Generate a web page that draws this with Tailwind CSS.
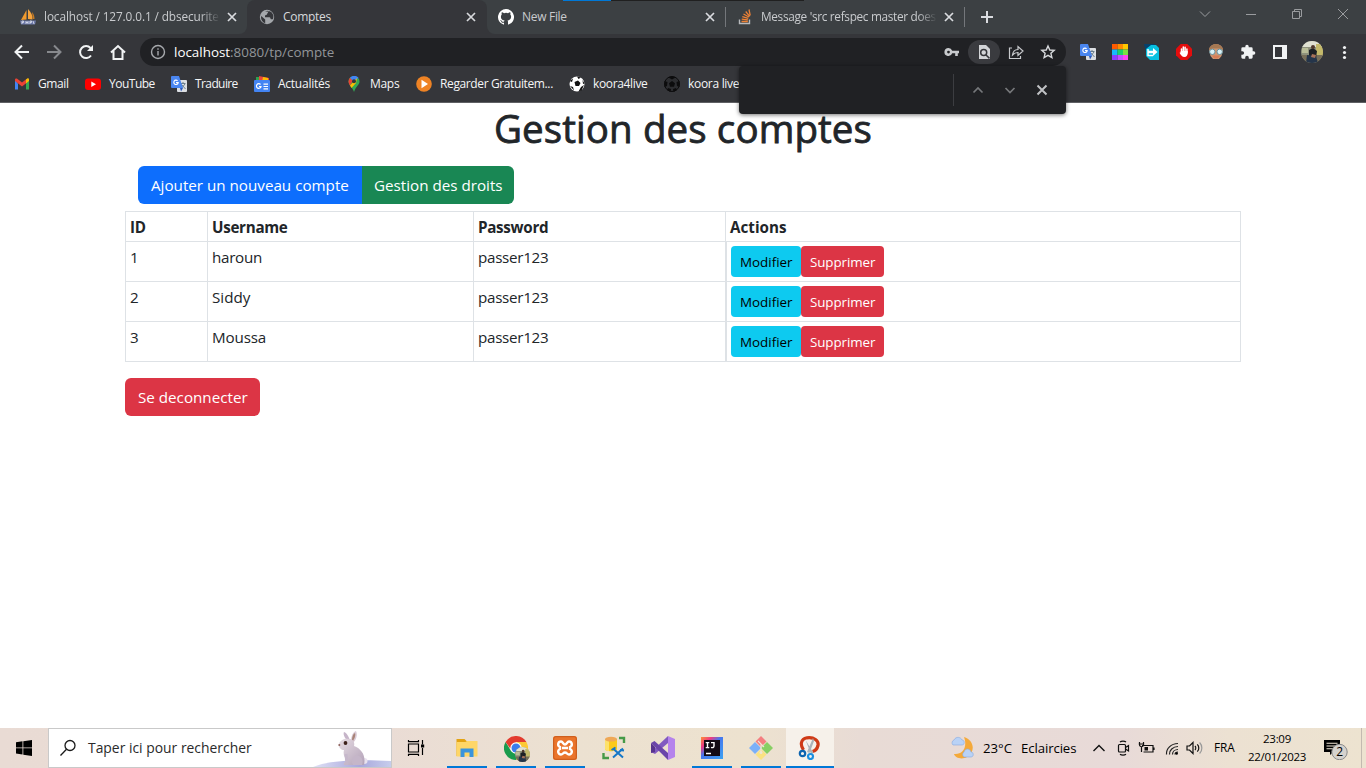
<!DOCTYPE html>
<html lang="fr">
<head>
<meta charset="utf-8">
<title>Comptes</title>
<script src="https://cdn.jsdelivr.net/npm/@tailwindcss/browser@4"></script>
</head>
<body class="w-[1366px] h-[768px] overflow-hidden bg-white font-['Open_Sans','Noto_Sans',sans-serif] text-[#212529]">
<svg class="hidden">
  <symbol id="x" viewBox="0 0 10 10"><path d="M1 1l8 8M9 1L1 9" stroke="currentColor" stroke-width="1.7" fill="none"/></symbol>
  <symbol id="translate" viewBox="0 0 16 16"><rect x="6" y="4" width="10" height="12" rx="1" fill="#dcdfe3"/><path d="M9.500 7.500h5M12 6v1.500M10.500 8.500l4 4.500M14 8l-4 5" stroke="#6b7f8c" fill="none"/><path d="M1 0h7l4 12H1a1 1 0 0 1-1-1V1a1 1 0 0 1 1-1z" fill="#4a86f0"/><path d="M9 12h3l-2 3.500z" fill="#2c58b8"/><path d="M6.600 4.800A2.200 2.200 0 1 0 7.200 6.600H5" stroke="#fff" stroke-width="1.100" fill="none"/></symbol>
  <symbol id="avatar" viewBox="0 0 22 22"><path d="M0 0h22v22H0z" fill="#8f927c"/><path d="M0 0h22v6H0z" fill="#e0e1d2"/><path d="M15 3h7v13h-7z" fill="#c4b96a"/><path d="M1 7h6v5H1z" fill="#b9bd98"/><path d="M0 14h22v8H0z" fill="#776e58"/><path d="M8 9l4-2 4 3-1 7H8z" fill="#1d2024"/><circle cx="12" cy="6" r="2" fill="#51392e"/><path d="M6 14l9 1 2 7H5z" fill="#25354a"/><path d="M11 13l4 1-1 3-4-1z" fill="#a97258"/></symbol>
</svg>

<header class="relative h-[103px] w-full bg-[#35363a] text-[12px]">
  <div class="absolute left-[563px] top-0 z-10 h-px w-[48px] bg-[#0078d7]"></div>
  <div class="absolute left-[611px] top-0 z-10 h-px w-[193px] bg-[#202020]"></div>

  <!-- tab strip -->
  <div class="flex h-[34px] bg-[#35363a] text-[#c9cbce]">
    <div class="flex w-[247px] items-center rounded-br-lg bg-[#3c4043] pl-[20px]">
      <svg class="h-4 w-4" viewBox="0 0 16 16"><path d="M6.500 1v9.500L1 11z" fill="#f09a2e"/><path d="M8 0c3 3 5 7 4.500 10.500L8 10z" fill="#f7a43c"/><path d="M12 3c2 2 2.500 5 2.500 7H13z" fill="#c97b22"/><path d="M0 11.500h16l-1 4H1z" fill="#6c78a8"/><path d="M2 15v-3h1.500v1.500H2M6 12v3M8 12v3M6 13.500h2M10 15v-3h1.500v1.500H10M13 12l1 3" stroke="#e0e3ef" stroke-width=".8" fill="none"/></svg>
      <span class="ml-2 w-[178px] whitespace-nowrap text-[11.8px] tracking-[-0.1px] [mask-image:linear-gradient(to_right,black_88%,transparent_99%)]">localhost / 127.0.0.1 / dbsecurite</span>
      <svg class="ml-[5px] h-[10px] w-[10px] text-[#dadce0]"><use href="#x"/></svg>
    </div>
    <div class="w-[240px] bg-[#3c4043]"><div class="flex h-full w-full items-center rounded-t-lg bg-[#35363a] pl-[12px] text-[#d7d9dc]">
      <svg class="h-4 w-4" viewBox="0 0 16 16"><circle cx="8" cy="8" r="7.200" fill="#a4a7ab"/><path d="M2.200 7l4 3.500v3.800A6.300 6.300 0 0 1 2.200 7zM6 2.500l3-.8v1.500c0 1-1 1-1 2 0 .7-2 .5-2 1.600v1.400h4.500c1 0 1 2 1.500 2h1.800a6 6 0 0 0-3-8z" fill="#35363a"/></svg>
      <span class="ml-2 w-[178px] whitespace-nowrap tracking-[-0.3px]">Comptes</span>
      <svg class="ml-[5px] h-[10px] w-[10px]"><use href="#x"/></svg>
    </div></div>
    <div class="flex flex-1 items-center rounded-bl-lg bg-[#3c4043] pl-[11px]">
      <svg class="h-4 w-4" viewBox="0 0 16 16"><path fill="#fff" d="M8 0a8 8 0 0 0-2.530 15.590c.4.070.55-.17.55-.38v-1.490c-2.230.49-2.700-.94-2.700-.94-.36-.92-.89-1.170-.89-1.170-.73-.5.060-.49.060-.49.800.060 1.230.83 1.230.83.72 1.220 1.870.87 2.330.66.070-.52.280-.87.510-1.070-1.780-.2-3.640-.89-3.640-3.950 0-.87.310-1.590.82-2.150-.08-.2-.36-1.020.08-2.120 0 0 .67-.21 2.200.82a7.600 7.600 0 0 1 4 0c1.530-1.040 2.200-.82 2.200-.82.440 1.100.16 1.920.08 2.120.51.560.82 1.270.82 2.150 0 3.070-1.870 3.750-3.650 3.950.29.250.54.730.54 1.480v2.190c0 .21.150.46.550.38A8 8 0 0 0 8 0z"/></svg>
      <span class="ml-2 w-[178px] whitespace-nowrap tracking-[-0.3px]">New File</span>
      <svg class="ml-[5px] h-[10px] w-[10px] text-[#dadce0]"><use href="#x"/></svg>
      <div class="ml-[10px] h-5 w-px bg-[#74777b]"></div>
      <svg class="ml-[11px] h-4 w-4" viewBox="0 0 16 16"><path d="M2.500 10.500v4h10v-4" stroke="#b8babd" stroke-width="1.400" fill="none"/><path d="M4.500 12.500h6.300M4.700 10.200l6.200.6M5.300 7.600l6 1.700M6.500 5l5.400 3M8.700 2.500l4 4.800M12 .5l1.200 6" stroke="#ef8236" stroke-width="1.300"/></svg>
      <span class="ml-2 w-[178px] whitespace-nowrap text-[11.8px] tracking-[-0.31px] [mask-image:linear-gradient(to_right,black_88%,transparent_99%)]">Message 'src refspec master does</span>
      <svg class="ml-[5px] h-[10px] w-[10px] text-[#dadce0]"><use href="#x"/></svg>
      <div class="ml-[10px] h-5 w-px bg-[#74777b]"></div>
      <svg class="ml-[15px] h-[14px] w-[14px]" viewBox="0 0 14 14"><path d="M7 1v12M1 7h12" stroke="#dadce0" stroke-width="2"/></svg>
      <div class="mb-[6px] ml-auto flex w-[184px] text-[#9a9c9f]">
        <svg class="w-[46px] h-4" viewBox="0 0 46 16" fill="none" stroke="currentColor"><path d="M18 5.500l5 5 5-5"/></svg>
        <svg class="w-[46px] h-4" viewBox="0 0 46 16" fill="none" stroke="currentColor"><path d="M18 8.500h10"/></svg>
        <svg class="w-[46px] h-4" viewBox="0 0 46 16" fill="none" stroke="currentColor"><path d="M18.500 5.500h7v7h-7zM20.500 5.500v-2h7v7h-2"/></svg>
        <svg class="w-[46px] h-4" viewBox="0 0 46 16" fill="none" stroke="currentColor"><path d="M18 3l10 10M28 3L18 13"/></svg>
      </div>
    </div>
  </div>

  <!-- toolbar -->
  <div class="flex h-9 items-center pl-[6px]">
    <svg class="h-8 w-8" viewBox="0 0 32 32" fill="none" stroke="#f1f3f4" stroke-width="2"><path d="M23 16H10M16 9.500L9.500 16l6.500 6.500"/></svg>
    <svg class="h-8 w-8" viewBox="0 0 32 32" fill="none" stroke="#87898d" stroke-width="2"><path d="M9 16h13M16 9.500l6.500 6.500-6.500 6.500"/></svg>
    <svg class="h-8 w-8" viewBox="0 0 32 32" fill="none" stroke="#f1f3f4" stroke-width="2"><path d="M21 19.500A6 6 0 1 1 20.500 12"/><path d="M23 9v6h-6z" fill="#f1f3f4" stroke="none"/></svg>
    <svg class="h-8 w-8" viewBox="0 0 32 32" fill="none" stroke="#f1f3f4" stroke-width="2"><path d="M9 16.500l7-6.500 7 6.500M11.500 15v8h9v-8"/></svg>
    <div class="ml-[6px] flex h-7 w-[926px] items-center rounded-full bg-[#202124] pl-[10px]">
      <svg class="h-4 w-4" viewBox="0 0 16 16" fill="none" stroke="#a6a9ad" stroke-width="1.400"><circle cx="8" cy="8" r="6.500"/><path d="M8 7v4.500M8 4.300v1.500"/></svg>
      <span class="ml-2 whitespace-nowrap text-[13.4px] text-[#929599]"><span class="text-white">localhost</span>:8080/tp/compte</span>
      <div class="ml-auto mr-[2px] flex">
        <svg class="h-8 w-8" viewBox="0 0 32 32"><path fill="#c8cacd" fill-rule="evenodd" d="M12.500 12a4 4 0 0 1 3.700 2.700H23v2.600h-1.200V20h-2.600v-2.700h-3A4 4 0 1 1 12.500 12zm0 2.700a1.400 1.400 0 1 0 0 2.800 1.400 1.400 0 0 0 0-2.800z"/></svg>
        <svg class="h-8 w-8" viewBox="0 0 32 32"><rect y="4" width="32" height="24" rx="12" fill="#3a3b3f"/><path d="M11 9h7l4 4v10H11z" fill="#d3d5d8"/><circle cx="15.700" cy="16.500" r="3" stroke="#35363a" stroke-width="1.500" fill="#d3d5d8"/><path d="M17.800 18.700l3.700 3.700" stroke="#35363a" stroke-width="1.500"/></svg>
        <svg class="h-8 w-8" viewBox="0 0 32 32" fill="none" stroke="#c8cacd" stroke-width="1.200"><path d="M12 12H9.500v10.500h11V20"/><path d="M12.500 19c.5-4 3-5.500 5.500-5.500V10.500l5 4.500-5 4.500v-3c-2.500 0-4 .8-5.500 2.500z"/></svg>
        <svg class="h-8 w-8" viewBox="0 0 32 32" fill="none" stroke="#d7d9dc" stroke-width="1.400"><path d="M16 10l1.800 4 4.400.4-3.300 2.900 1 4.300-3.900-2.300-3.900 2.300 1-4.300-3.300-2.900 4.400-.4z"/></svg>
      </div>
    </div>
    <div class="ml-[6px] flex items-center [&>svg]:mx-2">
      <svg class="h-4 w-4"><use href="#translate"/></svg>
      <svg class="h-4 w-4" viewBox="0 0 16 16"><path fill="#ff5a00" d="M0 0h5.500v5.500H0z"/><path fill="#ff8a00" d="M5.500 0H11v5.500H5.500z"/><path fill="#ffc800" d="M11 0h5v5.500h-5z"/><path fill="#18b9fb" d="M0 5.500h5.500V11H0z"/><path fill="#1bd36a" d="M5.500 5.500H11V11H5.500z"/><path fill="#7be043" d="M11 5.500h5V11h-5z"/><path fill="#8b3dff" d="M0 11h5.500v5H0z"/><path fill="#c44dff" d="M5.500 11H11v5H5.500z"/><path fill="#ff47f0" d="M11 11h5v5h-5z"/></svg>
      <svg class="h-4 w-4" viewBox="0 0 16 16"><path d="M0 0h11l-4 6-5 2z" fill="#07416b"/><path d="M2 5l5-4h5l3 3v12H6l-4-4z" fill="#08c0e0"/><path d="M4 5v6.500h5" stroke="#fff" stroke-width="1.500" fill="none"/><path d="M4 6.700h5V4l4.500 4L9 12V9.300H4z" fill="#fff"/></svg>
      <svg class="h-4 w-4" viewBox="0 0 16 16"><path d="M4.700 0h6.600L16 4.700v6.600L11.300 16H4.700L0 11.300V4.700z" fill="#e40d0d"/><path d="M5.500 9V5M7.300 8V3M9.100 8V3.300M10.900 9V5" stroke="#fff" stroke-width="1.500" stroke-linecap="round"/><path d="M4.800 7h6.900v2c0 2-1 4-3.300 4S5 11.500 3.500 8.800l1-.4z" fill="#fff"/></svg>
      <svg class="h-4 w-4" viewBox="0 0 16 16"><path d="M1 6a7 6 0 0 1 14 0l-1.500 6-2.500 3H5l-2.500-3z" fill="#cf9672"/><path d="M1 6.500a7 6.500 0 0 1 14 0l-3-2H4z" fill="#a57852"/><path d="M4 11.500h8l-2 3H6z" fill="#d67d55"/><g fill="#d9f2f7" stroke="#5f8d9c" stroke-width=".9"><circle cx="4.300" cy="7.800" r="2.700"/><circle cx="11.700" cy="7.800" r="2.700"/></g></svg>
      <svg class="h-4 w-4" viewBox="0 0 24 24" fill="#f1f3f4"><path d="M20.500 11H19V7a2 2 0 0 0-2-2h-4V3.500a2.500 2.500 0 0 0-5 0V5H4a2 2 0 0 0-2 2v3.800h1.500a2.700 2.700 0 0 1 0 5.400H2V20a2 2 0 0 0 2 2h3.800v-1.500a2.700 2.700 0 0 1 5.400 0V22H17a2 2 0 0 0 2-2v-4h1.500a2.500 2.500 0 0 0 0-5z"/></svg>
      <svg class="h-4 w-4" viewBox="0 0 16 16"><path fill="#f1f3f4" fill-rule="evenodd" d="M1 1h14v14H1zm2 2v10h7V3z"/></svg>
      <svg class="!mx-[5px] h-[22px] w-[22px] rounded-full"><use href="#avatar"/></svg>
      <svg class="h-4 w-4" viewBox="0 0 16 16" fill="#f1f3f4"><circle cx="8.500" cy="3.500" r="1.600"/><circle cx="8.500" cy="8.500" r="1.600"/><circle cx="8.500" cy="13.500" r="1.600"/></svg>
    </div>
  </div>

  <!-- bookmarks -->
  <div class="flex h-[33px] items-center border-b border-[#5f6064] pb-1 whitespace-nowrap text-[#f4f5f6]">
    <div class="ml-[14px] flex w-[71px] items-center gap-2">
      <svg class="h-4 w-4 shrink-0" viewBox="0 0 16 16"><path d="M1 4v9.500h3V7.500z" fill="#4285f4"/><path d="M12 7.500v6h3V4z" fill="#34a853"/><path d="M1 4.500V3.600c0-1.200 1.500-1.500 2.200-.8L8 6.500l4.800-3.700v4L8 10.500 1 5z" fill="#ea4335"/><path d="M12 3.500l1-.8c.8-.7 2-.3 2 .9v1.500l-3 2.400z" fill="#fbbc04"/></svg><span class="tracking-[-0.4px]">Gmail</span></div>
    <div class="flex w-[86px] items-center gap-2">
      <svg class="h-4 w-4 shrink-0" viewBox="0 0 16 16"><rect y="2.500" width="16" height="11.500" rx="3" fill="#f00"/><path d="M6.300 5.500v5.500l4.700-2.700z" fill="#fff"/></svg><span class="tracking-[-0.5px]">YouTube</span></div>
    <div class="flex w-[83px] items-center gap-2"><svg class="h-4 w-4 shrink-0"><use href="#translate"/></svg><span class="tracking-[-0.6px]">Traduire</span></div>
    <div class="flex w-[92px] items-center gap-2"><svg class="h-4 w-4 shrink-0" viewBox="0 0 16 16"><path d="M2 1h9v4H2z" fill="#2ea34f"/><path d="M5 0l10 2v4H5z" fill="#e8453c"/><path d="M9 1l5 1v4H8z" fill="#fbbc04"/><rect y="4" width="16" height="12" rx="1" fill="#4384f3"/><path d="M6.500 8.500a2.300 2.300 0 1 0 .5 2H5M9.500 8.200H14M9.500 10.500h4.500M9.500 12.800h4.500" stroke="#fff" stroke-width="1.200" fill="none"/></svg><span class="tracking-[-0.25px]">Actualités</span></div>
    <div class="flex w-[70px] items-center gap-2"><svg class="h-4 w-4 shrink-0" viewBox="0 0 16 16"><path d="M8 0a5.500 5.500 0 0 1 5.500 5.500C13.500 9 10 10 8 16 7 12 3 10 2.500 5.500A5.500 5.500 0 0 1 8 0z" fill="#34a853"/><path d="M2.500 5.500A5.500 5.500 0 0 1 4 1.800L7 4.500l-3 5c-.9-1.200-1.500-2.500-1.500-4z" fill="#ea4335"/><path d="M4 1.800a5.500 5.500 0 0 1 8.500 0L8 6z" fill="#4285f4"/><path d="M4 9.500L11 2l-1 5-4.500 5z" fill="#fbbc04"/><circle cx="8" cy="5.300" r="2" fill="#35363a"/></svg><span class="tracking-[-0.3px]">Maps</span></div>
    <div class="flex w-[153px] items-center gap-2"><svg class="h-4 w-4 shrink-0" viewBox="0 0 16 16"><circle cx="8" cy="8" r="7.800" fill="#ef8324"/><path d="M5.500 3.800L12 8l-6.500 4.200z" fill="#fff"/></svg><span class="tracking-[-0.38px]">Regarder Gratuitem...</span></div>
    <div class="flex w-[95px] items-center gap-2"><svg class="h-4 w-4 shrink-0" viewBox="0 0 16 16"><circle cx="8" cy="8" r="7.500" fill="#fff"/><path d="M5.500 6l3.500-1.500 2.500 2.500L10 10H6.500zM8 .5l4 1-2.500 1.500zM.7 5L4 2.500 3 6zM1 10l3 1 1 3.500zM12 11l3-2-2.500 5.500-3 1zM13.500 4l2 3.500L14 8z" fill="#111"/></svg><span class="tracking-[-0.35px]">koora4live</span></div>
    <div class="flex items-center gap-2"><svg class="h-4 w-4 shrink-0" viewBox="0 0 16 16"><circle cx="8" cy="8" r="7.500" fill="#2c2d30" stroke="#0c0c0d"/><path d="M8 5l3 2.200-1 3.600H6L5 7.200zM8 0l3.500 1.500L8 3.500 4.500 1.500zM.5 5L3.500 6 3 10 .5 11zM15.500 5l-3 1 .5 4 2.500 1zM4 12l3 1-.5 3-3.500-2zM12 12l-3 1 .5 3 3.500-2z" fill="#0c0c0d"/></svg><span class="tracking-[-0.3px]">koora live</span></div>
  </div>

  <!-- find bar -->
  <div class="absolute left-[739px] top-[66px] z-20 flex h-[48px] w-[327px] items-center rounded-[4px] bg-[#202124] shadow-[0_1px_4px_rgba(0,0,0,.55)]">
    <div class="ml-[214px] h-8 w-px bg-[#3c3d41]"></div>
    <svg class="ml-2 h-8 w-8" viewBox="0 0 32 32" fill="none" stroke="#76787b" stroke-width="1.700"><path d="M11.500 18.500L16 14l4.500 4.500"/></svg>
    <svg class="h-8 w-8" viewBox="0 0 32 32" fill="none" stroke="#76787b" stroke-width="1.700"><path d="M11.500 14l4.500 4.500 4.500-4.500"/></svg>
    <svg class="h-8 w-8" viewBox="0 0 32 32" fill="none" stroke="#c0c2c5" stroke-width="2"><path d="M11.500 11.500l9 9M20.500 11.500l-9 9"/></svg>
  </div>
</header>

<main class="mx-auto flex h-[625px] w-[1116px] flex-col items-start text-[15.2px] leading-[23px] whitespace-nowrap">
  <h1 class="mt-px self-center text-[38.500px] leading-[48px] tracking-[0.1px] [-webkit-text-stroke:0.8px_#212529]">Gestion des comptes</h1>
  <div class="ml-[13px] mt-[14px] flex h-[38px] overflow-hidden rounded-md leading-[38px] text-white">
    <div class="w-[224px] bg-[#0d6efd] pl-[13px]">Ajouter un nouveau compte</div>
    <div class="w-[152px] bg-[#198754] pl-3">Gestion des droits</div>
  </div>
  <div class="mt-[7px] grid w-[1116px] grid-cols-[82px_266px_252px_515px] grid-rows-[30px_40px_40px_40px] border-l border-t border-[#dee2e6] [&>div]:border-b [&>div]:border-r [&>div]:border-[#dee2e6] [&>div]:pl-1 [&>div]:pt-1 tracking-[-0.3px]">
    <div class="font-bold">ID</div><div class="font-bold">Username</div><div class="font-bold">Password</div><div class="font-bold tracking-normal">Actions</div>
    <div>1</div><div>haroun</div><div>passer123</div>
    <div class="flex border-l text-[13.4px] leading-[32px]"><span class="h-[31px] w-[70px] rounded bg-[#0dcaf0] pl-[9px] tracking-normal text-black">Modifier</span><span class="h-[31px] w-[83px] rounded bg-[#dc3545] pl-[9px] tracking-[-0.1px] text-white">Supprimer</span></div>
    <div>2</div><div class="tracking-normal">Siddy</div><div>passer123</div>
    <div class="flex border-l text-[13.4px] leading-[32px]"><span class="h-[31px] w-[70px] rounded bg-[#0dcaf0] pl-[9px] tracking-normal text-black">Modifier</span><span class="h-[31px] w-[83px] rounded bg-[#dc3545] pl-[9px] tracking-[-0.1px] text-white">Supprimer</span></div>
    <div>3</div><div class="tracking-[-0.15px]">Moussa</div><div>passer123</div>
    <div class="flex border-l text-[13.4px] leading-[32px]"><span class="h-[31px] w-[70px] rounded bg-[#0dcaf0] pl-[9px] tracking-normal text-black">Modifier</span><span class="h-[31px] w-[83px] rounded bg-[#dc3545] pl-[9px] tracking-[-0.1px] text-white">Supprimer</span></div>
  </div>
  <div class="mt-4 h-[38px] w-[135px] rounded-md bg-[#dc3545] pl-[13px] leading-[38px] text-white">Se deconnecter</div>
</main>

<footer class="flex h-10 w-full items-stretch whitespace-nowrap bg-[linear-gradient(90deg,#e9dbd4_0%,#eadcd5_28%,#ece1d1_42%,#ede2cf_55%,#e8dbd5_63%,#e8dad8_82%,#ece1d2_90%,#ede3d0_100%)] text-black">
  <div class="flex w-12 items-center justify-center"><svg class="h-4 w-4" viewBox="0 0 16 16"><path d="M0 2.200L6.500 1.300v6.200H0zM7.300 1.200L16 0v7.500H7.300zM0 8.300h6.500v6.200L0 13.600zM7.300 8.300H16V16l-8.700-1.300z"/></svg></div>
  <div class="flex w-[344px] items-center border border-[#c9c9c9] bg-white pl-[10px]">
    <svg class="h-[18px] w-[18px]" viewBox="0 0 18 18" fill="none" stroke="#1a1a1a" stroke-width="1.300"><circle cx="11" cy="6.500" r="5"/><path d="M7.500 10.200L1.500 16.500"/></svg>
    <span class="ml-[11px] text-[13.9px] text-[#2a2a2a]">Taper ici pour rechercher</span>
    <svg class="ml-auto h-[38px] w-[78px]" viewBox="0 0 78 38"><defs><linearGradient id="hill" x2="1"><stop stop-color="#dfe0f5"/><stop offset=".6" stop-color="#a9a8dc"/><stop offset="1" stop-color="#c6cdec"/></linearGradient><linearGradient id="fur" x2="1" y2="1"><stop stop-color="#e6dce3"/><stop offset="1" stop-color="#b3a2b8"/></linearGradient></defs><path d="M0 38c14-6 40-8 78-6v6z" fill="url(#hill)"/><path d="M35 13c-4-5-5-8-4-10 3 1 5 5 6 9z" fill="#c6b5c9"/><path d="M38 12c0-5 2-9 5-10 2 4 0 9-3 12z" fill="#dacbd6"/><path d="M39 11c0-3 1-6 3-7 1 3-1 6-2 8z" fill="#a98478"/><circle cx="51.500" cy="32" r="3" fill="#e9e2ee"/><path d="M26 15c1-4 6-6 10-5 4 0 6 3 5 7 8 3 12 10 10 19H31c-1-3 3-4 3-4-3-4-4-7-3-11-3 0-6-3-5-6z" fill="url(#fur)"/><path d="M40 36c-3-6 1-11 6-9 4 2 4 6 3 9" fill="#c5b6c9"/><path d="M33 25l1 11" stroke="#c6b8cb" stroke-width="3"/><circle cx="32.500" cy="14" r="1.900" fill="#3d211b"/><circle cx="26.300" cy="16" r="1" fill="#8d6159"/></svg>
  </div>
  <div class="flex w-[48px] items-center justify-center"><svg class="h-[18px] w-[18px]" viewBox="0 0 18 18" fill="none" stroke="#000" stroke-width="1.200"><path d="M1.500 5h10v8h-10zM1.500 1v1.700h10V1M1.500 17v-1.700h10V17M15.500 1v4.500M15.500 9v7"/><path d="M14 5.500h3.200v3H14z" fill="#000" stroke="none"/></svg></div>

  <div class="ml-[2px] flex [&>div]:flex [&>div]:w-[49px] [&>div]:items-center [&>div]:justify-center [&>div]:bg-no-repeat [&>div]:bg-bottom">
    <div class="bg-[linear-gradient(#0078d7,#0078d7)] bg-[length:40px_2px]"><svg class="h-6 w-6" viewBox="0 0 24 24"><path d="M1.500 3h8l2 2H22v15H1.500z" fill="#e3a313"/><path d="M1.500 6h9l1.500-1h10.500v15.500h-21z" fill="#fed667"/><path d="M5.500 21v-8.500h13V21h-4v-4.500h-5V21z" fill="#3a94dc"/></svg></div>
    <div class="bg-[linear-gradient(#0078d7,#0078d7)] bg-[length:40px_2px]"><div class="relative h-6 w-6"><svg class="h-6 w-6" viewBox="0 0 24 24"><path d="M12 12L1.600 6A12 12 0 0 1 22.400 6z" fill="#e33b2e"/><path d="M12 12V6h10.400A12 12 0 0 1 12 24z" fill="#fcc934"/><path d="M1.600 6A12 12 0 0 0 12 24l5-9-5 3-5-3z" fill="#199b4c"/><path d="M1.600 6H12v6H6z" fill="#e33b2e"/><circle cx="12" cy="12" r="5.700" fill="#fff"/><circle cx="12" cy="12" r="4.500" fill="#3b7ded"/></svg><svg class="absolute left-[11px] top-[11px] h-[15px] w-[15px] rounded-full"><use href="#avatar"/></svg></div></div>
    <div class="bg-[linear-gradient(#0078d7,#0078d7)] bg-[length:40px_2px]"><svg class="h-6 w-6" viewBox="0 0 24 24"><rect width="24" height="24" rx="2.500" fill="#ea742b"/><rect x=".7" y=".7" width="22.600" height="22.600" rx="2" fill="none" stroke="#c9591b" stroke-width="1"/><path d="M8 5.500c-3 0-4 4-1 5.500v2c-3 1.500-2 5.500 1 5.500 2 0 2-2 4-2s2 2 4 2c3 0 4-4 1-5.500v-2c3-1.500 2-5.500-1-5.500-2 0-2 3-4 3s-2-3-4-3zM9 12h6" fill="none" stroke="#fff" stroke-width="2.400"/></svg></div>
    <div><svg class="h-6 w-6" viewBox="0 0 24 24"><path d="M3 3v10c0 3 12 3 12 0V3z" fill="#fbc91b"/><path d="M3 3v10c0 1.500 2 2 4 2V5z" fill="#fde16b"/><ellipse cx="9" cy="3.200" rx="6" ry="2.400" fill="#efa856"/><path d="M17 2h5v5M1.500 17v5h5.500" stroke="#459a47" stroke-width="2.400" fill="none"/><path d="M11 12.500l10 9M21 12.500l-10 9" stroke="#1477c8" stroke-width="2"/><path d="M9.500 14l4-2.500M18 14l4 .5" stroke="#1477c8" stroke-width="1.800"/></svg></div>
    <div><svg class="h-6 w-6" viewBox="0 0 24 24"><path d="M17 0l7 3v18l-7 3z" fill="#b583ec"/><path d="M17 0v7L4 18l-4-2z" fill="#815ac0"/><path d="M0 7l3.500-2L17 17v7z" fill="#6b45aa"/><path d="M0 7l4 4v5l-4 1z" fill="#57338f"/></svg></div>
    <div class="bg-[linear-gradient(#0078d7,#0078d7)] bg-[length:40px_2px]"><svg class="h-6 w-6" viewBox="0 0 24 24"><defs><linearGradient id="ij" x2="1" y2="1"><stop stop-color="#ff9135"/><stop offset=".25" stop-color="#ec3a83"/><stop offset=".45" stop-color="#4777ed"/><stop offset="1" stop-color="#3ba2f2"/></linearGradient></defs><rect x="1" y="1" width="22" height="22" fill="url(#ij)"/><rect x="4" y="4" width="16" height="16" fill="#120b14"/><path d="M5.700 6.600h3.600M7.500 6.600v5M5.700 11.600h3.600M11 6.600h3v3.500c0 1.500-1.500 1.800-3 1.300M6 17.500h5" stroke="#fff" stroke-width="1.400" fill="none"/></svg></div>
    <div class="bg-[linear-gradient(#0078d7,#0078d7)] bg-[length:40px_2px]"><svg class="h-6 w-6" viewBox="0 0 24 24"><path d="M12 0l5.500 5.500L12 11 6.500 5.500z" fill="#f47e80"/><path d="M18 6l6 6-6 6-6-6z" fill="#87cf64"/><path d="M6 6l6 6-6 6-6-6z" fill="#7bb0f8"/><path d="M12 13l5.500 5.500L12 24l-5.500-5.500z" fill="#fae281"/><path d="M9 5l6 6M12 8v9" stroke="#eee4d5" stroke-width="1.200"/><circle cx="12" cy="16.500" r="1.500" fill="#eee4d5"/></svg></div>
    <div class="ml-px !w-[48px] bg-[#f6f1ea] bg-[linear-gradient(#0078d7,#0078d7)] bg-[length:48px_2px]"><svg class="h-6 w-6" viewBox="0 0 24 24"><path d="M5.500 14C2 9 2.500 3 9 1.800c7-1 12 3 11 7.700-1 4-3 5.500-5.500 6" fill="none" stroke="#cf3a16" stroke-width="3.200"/><path d="M7.500 4l5.500 14 2.500-1zM15 2l-6 14 2.500 1 4.500-12z" fill="#aab2b8"/><circle cx="4.500" cy="17.500" r="2.700" fill="none" stroke="#0c64b0" stroke-width="2.200"/><circle cx="12.500" cy="20.500" r="2.500" fill="none" stroke="#1a8fe0" stroke-width="2.200"/></svg></div>
  </div>

  <div class="ml-auto flex w-[416px] items-center text-[13.2px]">
    <svg class="h-6 w-6" viewBox="0 0 24 24"><path d="M14 1c10 3 12 15 3 20-5 3-12 1-13-3 8 1 14-6 10-17z" fill="#f4a93a"/><path d="M3 9a3 3 0 0 1 1-5c2-4 7-3 8 0 3 0 3 5 0 5z" fill="#b9d2f6" stroke="#86a9df" stroke-width=".6"/><path d="M14 21a3 3 0 0 1 0-5c1-4 6-4 7 0 3 0 3 5 0 5z" fill="#b9d2f6" stroke="#86a9df" stroke-width=".6"/></svg>
    <span class="ml-[9px] mt-[2px] w-[38px]">23°C</span><span class="mt-[2px] w-[67px] tracking-[-0.1px]">Eclaircies</span>
    <svg class="ml-1 h-4 w-[14px]" viewBox="0 0 14 16" fill="none" stroke="#111" stroke-width="1.400"><path d="M1.500 11L7 5.500l5.500 5.500"/></svg>
    <svg class="ml-[11px] h-4 w-[14px]" viewBox="0 0 14 16" fill="none" stroke="#111" stroke-width="1.200"><rect x="1.500" y="4.500" width="7" height="7.500" rx="1"/><path d="M8.500 7.500l3-2v5.500l-3-2M3 2C4.500.7 7.500.7 9 2M3 14.300c1.500 1.200 4.500 1.200 6 0"/></svg>
    <svg class="ml-[7px] h-4 w-[17px]" viewBox="0 0 17 16" fill="none" stroke="#111" stroke-width="1.200"><path d="M4 5.500h11v6.500H5.500M16 7.500v2.500M1.500 2v2.500c0 3 4 3 4 0V2M.7 4h5.500M3.500 7v5"/><path d="M6.500 7H10v3.500H6.500z" fill="#111" stroke="none"/></svg>
    <svg class="ml-[10px] h-4 w-[14px]" viewBox="0 0 14 16" fill="none" stroke="#222" stroke-width="1.200"><path d="M1.500 14.500C1 9 6 3.500 13 3.500M4.500 14.500C4 10.500 8 6.500 13 6.500M7.500 14.500c0-3 2.500-5 5.500-5M10 14.500c0-1.500 1-2.500 3-2.500"/><circle cx="11.700" cy="13.500" r="1.200" fill="#000" stroke="none"/></svg>
    <svg class="ml-[7px] h-4 w-[17px]" viewBox="0 0 17 16" fill="none" stroke="#111" stroke-width="1.200"><path d="M1 6h2.500L7 2.500v11L3.500 10H1zM9 6c1 1 1 3 0 4M11.300 4.300c2 2 2 5.400 0 7.400"/><path d="M13.600 2.500c3 3 3 8 0 11" stroke="#999"/></svg>
    <span class="ml-[11px] w-[33px] text-[11.800px]">FRA</span>
    <div class="-mt-px w-[60px] text-center text-[11.500px] leading-[18px] tracking-[-0.3px]"><div>23:09</div><div>22/01/2023</div></div>
    <svg class="ml-[17px] h-6 w-6" viewBox="0 0 24 24"><path d="M0 4h16v12H9l-3 3v-3H0z"/><path d="M2.500 7.200h11M2.500 10h11M2.500 12.800h7" stroke="#efe5d4" stroke-width="1.100"/><circle cx="15.500" cy="16" r="7.700" fill="#d5d2cd" stroke="#8a8a8a"/><text x="12.300" y="20.300" font-size="12" font-family="Open Sans">2</text></svg>
    <div class="ml-auto mr-1 h-full w-px bg-[#c3bab0]"></div>
  </div>
</footer>
</body>
</html>
